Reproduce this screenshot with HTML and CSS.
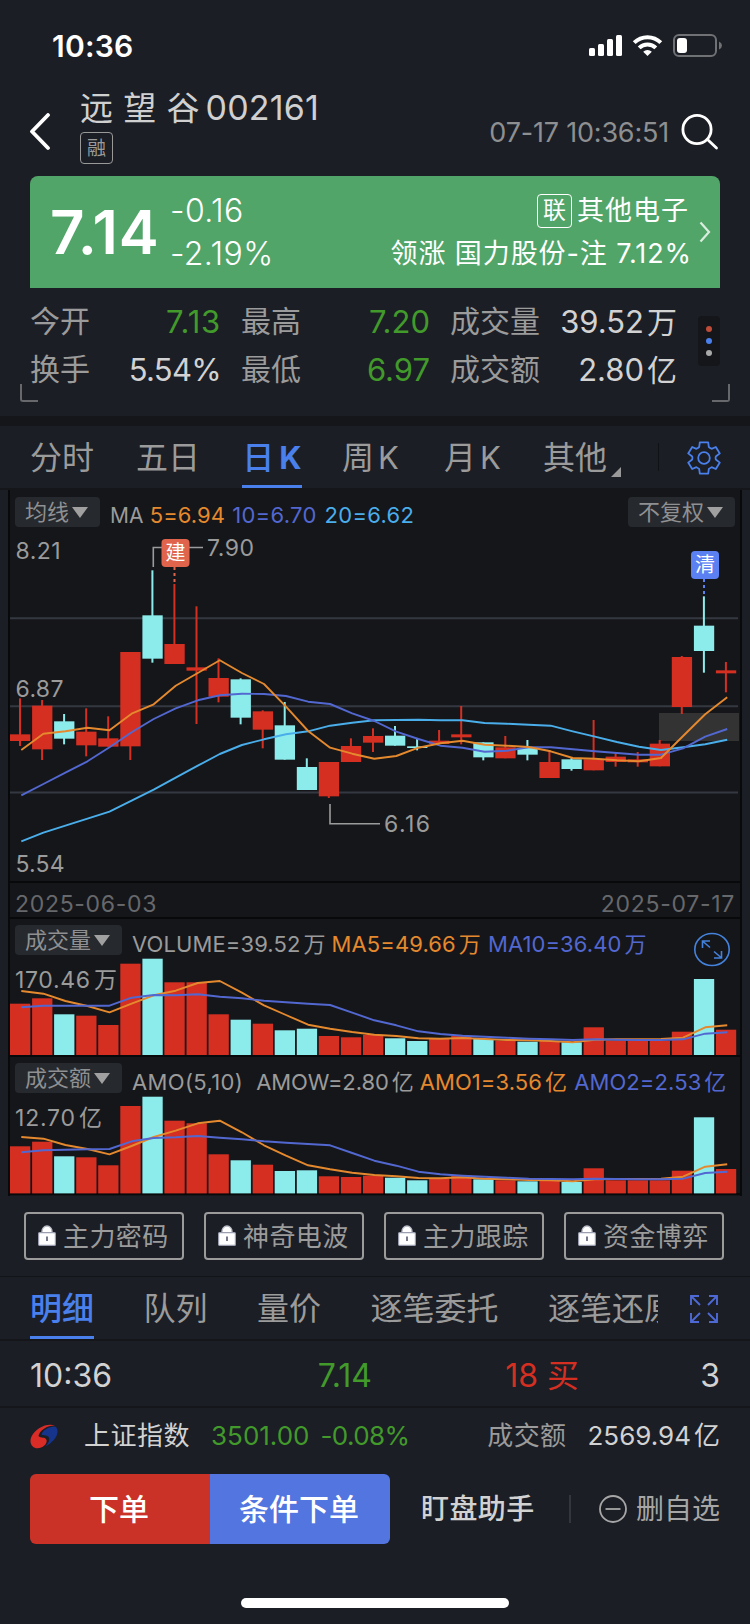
FILE: index.html
```html
<!DOCTYPE html>
<html lang="zh-CN">
<head>
    <meta charset="UTF-8">
    <meta name="viewport" content="width=device-width, initial-scale=1.0">
    <title>远望谷 002161</title>
    <link rel="stylesheet" href="styles.css">
</head>
<body>
    <div class="status-bar">
        <span class="clock">10:36</span>
        <svg class="status-icons" width="136" height="26" viewBox="586 32 136 26">
            <g fill="#fff">
                <rect x="589" y="48" width="6" height="8" rx="1.5"/>
                <rect x="598" y="44" width="6" height="12" rx="1.5"/>
                <rect x="607" y="39" width="6" height="17" rx="1.5"/>
                <rect x="616" y="35" width="6" height="21" rx="1.5"/>
                <path d="M647.5 56 L643.2 51.7 A6.2 6.2 0 0 1 651.8 51.7 Z"/>
            </g>
            <g fill="none" stroke="#fff" stroke-width="4">
                <path d="M639.2 47.8 A11.8 11.8 0 0 1 655.8 47.8"/>
                <path d="M634.2 42.6 A19 19 0 0 1 660.8 42.6"/>
            </g>
            <rect x="674" y="35" width="42" height="21" rx="5" fill="none" stroke="#6f7175" stroke-width="2"/>
            <rect x="677" y="38" width="10" height="15" rx="3" fill="#fff"/>
            <path d="M719 41.5 Q722 43 722 45.5 Q722 48 719 49.5 Z" fill="#6f7175"/>
        </svg>
    </div>

    <header class="header">
        <svg class="back" width="22" height="38" viewBox="0 0 22 38" fill="none" stroke="#fff" stroke-width="3.8" stroke-linecap="round" stroke-linejoin="round">
            <path d="M19 2 L3 18.5 L19 35"/>
        </svg>
        <div class="title">
            <div class="name">远 望 谷<span class="code">002161</span></div>
            <span class="tag">融</span>
        </div>
        <span class="time">07-17 10:36:51</span>
        <svg class="search" width="38" height="36" viewBox="0 0 38 36" fill="none" stroke="#fff" stroke-width="2.8" stroke-linecap="round">
            <circle cx="16" cy="15.5" r="14.1"/>
            <path d="M26.5 25.5 L35.5 34"/>
        </svg>
    </header>

    <section class="quote">
        <span class="price">7.14</span>
        <div class="change">
            <span>-0.16</span>
            <span>-2.19%</span>
        </div>
        <div class="sector">
            <div class="sector-name"><span class="tag-light">联</span><span>其他电子</span></div>
            <div class="sector-lead">领涨 国力股份-注 7.12%</div>
        </div>
        <svg class="arrow" width="12" height="22" viewBox="0 0 12 22" fill="none" stroke="#d9eddf" stroke-width="2.2">
            <path d="M1.5 1.5 L10 11 L1.5 20.5"/>
        </svg>
    </section>

    <section class="stats">
        <dl class="stat-grid">
            <dt>今开</dt><dd class="green open">7.13</dd>
            <dt>最高</dt><dd class="green">7.20</dd>
            <dt>成交量</dt><dd>39.52<i>万</i></dd>
            <dt>换手</dt><dd class="turnover">5.54%</dd>
            <dt>最低</dt><dd class="green">6.97</dd>
            <dt>成交额</dt><dd>2.80<i>亿</i></dd>
        </dl>
        <div class="more"><b class="dot red"></b><b class="dot blue"></b><b class="dot grey"></b></div>
        <span class="corner left"></span>
        <span class="corner right"></span>
    </section>

    <nav class="periods">
        <span>分时</span>
        <span>五日</span>
        <span class="active">日<em>K</em></span>
        <span>周<em>K</em></span>
        <span>月<em>K</em></span>
        <span class="other">其他<svg width="10" height="10" viewBox="0 0 10 10"><path d="M10 0 V10 H0 Z" fill="#999"/></svg></span>
        <svg class="gear" width="34" height="34" viewBox="-17 -17 34 34" fill="none" stroke="#4a80ec" stroke-width="1.8" stroke-linejoin="round">
            <path d="M-4.2 -15.6 H4.2 L4.8 -11 Q6 -10 7.6 -9.2 L11.8 -11 L15.8 -4.6 L11.8 -1.5 Q11.3 0 11.8 1.5 L15.8 4.6 L11.8 11 L7.6 9.2 Q6 10 4.8 11 L4.2 15.6 H-4.2 L-4.8 11 Q-6 10 -7.6 9.2 L-11.8 11 L-15.8 4.6 L-11.8 1.5 Q-11.3 0 -11.8 -1.5 L-15.8 -4.6 L-11.8 -11 L-7.6 -9.2 Q-6 -10 -4.8 -11 Z"/>
            <circle r="5.8"/>
        </svg>
    </nav>

    <main class="charts">
        <div class="panel kline">
            <svg class="plot" id="kline" viewBox="10 490 730 391"></svg>
            <div class="panel-head">
                <span class="select">均线<i></i></span>
                <span class="legend ma-title">MA</span>
                <span class="legend c5">5=6.94</span>
                <span class="legend c10">10=6.70</span>
                <span class="legend c20">20=6.62</span>
                <span class="select right">不复权<i></i></span>
            </div>
        </div>
        <div class="panel dates"><span>2025-06-03</span><span>2025-07-17</span></div>
        <div class="panel volume">
            <svg class="plot" id="volume" viewBox="10 919 730 136"></svg>
            <div class="panel-head">
                <span class="select">成交量<i></i></span>
                <span class="legend v1">VOLUME=39.52<i>万</i></span>
                <span class="legend c5">MA5=49.66<i>万</i></span>
                <span class="legend c10">MA10=36.40<i>万</i></span>
                <svg class="zoom" width="38" height="36" viewBox="693 931 38 36" fill="none" stroke="#4482dc" stroke-width="1.6">
                    <ellipse cx="712" cy="949.5" rx="17.2" ry="16"/>
                    <path d="M710 947.5 L703 941.5 M702.5 948 V941 H710 M714 951.5 L721 957.5 M714 958 H721.5 V951"/>
                </svg>
            </div>
        </div>
        <div class="panel amount">
            <svg class="plot" id="amount" viewBox="10 1057 730 137"></svg>
            <div class="panel-head">
                <span class="select">成交额<i></i></span>
                <span class="legend a1">AMO(5,10)</span>
                <span class="legend a2">AMOW=2.80<i>亿</i></span>
                <span class="legend c5">AMO1=3.56<i>亿</i></span>
                <span class="legend c10">AMO2=2.53<i>亿</i></span>
            </div>
        </div>
    </main>

    <svg class="defs" width="0" height="0">
        <symbol id="lock" viewBox="0 0 18 21">
            <path d="M4 8 V6.5 A5 5.5 0 0 1 14 6.5 V8 Z" fill="#fff" stroke="#b9bcc8" stroke-width="1.4"/>
            <rect x=".6" y="7.6" width="16.8" height="12.8" rx="1" fill="#fff" stroke="#9a9eae" stroke-width="1.2"/>
            <rect x="8" y="11.5" width="2" height="4.5" fill="#777b8c"/>
        </symbol>
    </svg>

    <div class="locked">
        <span class="lock-btn"><svg width="18" height="21"><use href="#lock"/></svg><span>主力密码</span></span>
        <span class="lock-btn"><svg width="18" height="21"><use href="#lock"/></svg><span>神奇电波</span></span>
        <span class="lock-btn"><svg width="18" height="21"><use href="#lock"/></svg><span>主力跟踪</span></span>
        <span class="lock-btn"><svg width="18" height="21"><use href="#lock"/></svg><span>资金博弈</span></span>
    </div>

    <nav class="detail-tabs">
        <div class="scroller">
            <span class="active">明细</span>
            <span>队列</span>
            <span>量价</span>
            <span>逐笔委托</span>
            <span>逐笔还原</span>
        </div>
        <svg width="28" height="28" viewBox="0 0 28 28" fill="none" stroke="#4f69d4" stroke-width="1.9">
            <path d="M1 10 V1 H9 M1 1 L10 10 M19 1 H27 V10 M27 1 L18 10 M1 18 V27 H9 M1 27 L10 18 M19 27 H27 V18 M27 27 L18 18"/>
        </svg>
    </nav>

    <div class="tick">
        <span class="tick-time">10:36</span>
        <span class="tick-price">7.14</span>
        <span class="tick-vol">18 买</span>
        <span class="tick-count">3</span>
    </div>

    <div class="index-row">
        <svg width="28" height="25" viewBox="0 0 28 25">
            <path d="M25 1.6 C17 -1.5 6 4 1.5 12.5 C-1.5 19 2.5 24.2 7.5 24.2 C13.5 24.2 17.5 19.5 16.5 16 C15.5 12.5 10.5 14.5 8.5 12 C9.5 6.5 17 1.5 25 1.6 Z" fill="#d92c26"/>
            <path d="M25 2.4 C18 2.6 12.5 6.5 11.5 10.5 C13.5 12 18.5 10.5 19.2 14 C19.8 17.2 17.5 20.5 15 22.5 C21.5 19.5 28 13 27.5 7 C27.3 4.3 26.3 2.8 25 2.4 Z" fill="#17348c"/>
        </svg>
        <span class="index-name">上证指数</span>
        <span class="index-value">3501.00</span>
        <span class="index-pct">-0.08%</span>
        <span class="index-label">成交额</span>
        <span class="index-amount">2569.94<i>亿</i></span>
    </div>

    <footer class="actions">
        <span class="btn order">下单</span>
        <span class="btn cond">条件下单</span>
        <span class="watch">盯盘助手</span>
        <span class="remove">
            <svg width="28" height="28" viewBox="0 0 28 28" fill="none" stroke="#a6a6a6" stroke-width="1.8">
                <circle cx="14" cy="14" r="13"/>
                <path d="M6.5 14 H21.5"/>
            </svg>
            <span>删自选</span>
        </span>
    </footer>
    <div class="home-bar"></div>

    <script src="chart.js"></script>
</body>
</html>
```
FILE: styles.css
```css
* {
    box-sizing: border-box;
}
body {
    margin: 0;
    width: 750px;
    height: 1624px;
    overflow: hidden;
    background-color: #1b1e25;
    color: #9b9b9b;
    font-family: Inter, "Noto Sans CJK SC", sans-serif;
    font-size: 30px;
    line-height: 1;
    white-space: nowrap;
}
i, em {
    font-style: normal;
}
svg {
    display: block;
    flex: none;
}
.defs {
    height: 0;
}

/* status bar */
.status-bar {
    height: 88px;
    padding: 0 28px 0 52px;
    display: flex;
    align-items: center;
    justify-content: space-between;
    color: #fff;
}
.clock {
    font-size: 30px;
    font-weight: 600;
    letter-spacing: 0.2px;
    padding-top: 3px;
}
.status-icons {
    margin-top: 2px;
}

/* header */
.header {
    height: 88px;
    padding: 0 31px 0 29px;
    display: flex;
    align-items: center;
}
.title {
    flex: 1;
    align-self: flex-start;
    margin-left: 29px;
}
.name {
    font-size: 33px;
    line-height: 40px;
    color: #d0d0d0;
    word-spacing: 1px;
}
.code {
    font-size: 34px;
    margin-left: 6px;
    letter-spacing: 0.2px;
}
.tag {
    display: flex;
    align-items: center;
    justify-content: center;
    width: 33px;
    height: 32px;
    margin-top: 4px;
    border: 1px solid #999;
    border-radius: 4px;
    font-size: 19px;
}
.time {
    font-size: 27px;
    letter-spacing: -0.2px;
    color: #8e8f91;
}
.search {
    margin-left: 12px;
}

/* price banner */
.quote {
    height: 112px;
    margin: 0 30px;
    padding: 0 9px 0 20px;
    display: flex;
    align-items: center;
    background-color: #52a569;
    border-radius: 8px 8px 0 0;
    color: #fff;
}
.price {
    width: 120px;
    font-size: 60px;
    font-weight: 600;
    letter-spacing: 0.8px;
}
.change {
    flex: 1;
    font-size: 32px;
    font-weight: 350;
    letter-spacing: 0.4px;
}
.change span {
    display: block;
    line-height: 43px;
}
.sector {
    padding-top: 1px;
    font-size: 27px;
    text-align: right;
    margin-right: 9px;
}
.sector-name {
    display: flex;
    justify-content: flex-end;
    align-items: center;
    height: 42px;
    margin-right: 1px;
    letter-spacing: 1px;
}
.tag-light {
    display: flex;
    align-items: center;
    justify-content: center;
    width: 35px;
    height: 34px;
    margin-right: 5px;
    border: 1px solid #fff;
    border-radius: 4px;
    font-size: 23px;
    letter-spacing: 0;
}
.sector-lead {
    line-height: 44px;
    letter-spacing: 0.9px;
    margin-right: -2px;
}

/* open / high / low */
.stats {
    position: relative;
    height: 128px;
    padding: 9px 30px 0;
    display: flex;
    align-items: flex-start;
}
.stat-grid {
    margin: 0 21px 0 0;
    flex: 1;
    display: grid;
    grid-template-columns: 80px 111px 100px 109px 111px 136px;
    grid-auto-rows: 48px;
    align-items: center;
}
.stat-grid dt:nth-of-type(3n+2), .stat-grid dt:nth-of-type(3n) {
    padding-left: 20px;
}
.stat-grid dd {
    margin: 0;
    font-size: 31px;
    text-align: right;
    color: #d2d2d2;
}
.stat-grid dd i {
    font-size: 30px;
    margin-left: 3px;
}
.stat-grid dd.green {
    color: #429a2b;
}
.stat-grid .open {
    letter-spacing: 0.8px;
}
.stat-grid .turnover {
    letter-spacing: -0.7px;
}
.more {
    width: 22px;
    height: 50px;
    margin-top: 19px;
    border-radius: 4px;
    background-color: #15161a;
    display: flex;
    flex-direction: column;
    align-items: center;
    justify-content: center;
    gap: 6px;
}
.dot {
    width: 6px;
    height: 6px;
    border-radius: 50%;
}
.dot.red { background-color: #be4c38; }
.dot.blue { background-color: #4a80ec; }
.dot.grey { background-color: #a9a9a9; }
.corner {
    position: absolute;
    top: 96px;
    width: 18px;
    height: 18px;
    border-bottom: 2px solid #66686c;
}
.corner.left {
    left: 20px;
    border-left: 2px solid #66686c;
    border-radius: 0 0 0 3px;
}
.corner.right {
    right: 20px;
    border-right: 2px solid #66686c;
    border-radius: 0 0 3px 0;
}

/* period tabs */
.periods {
    height: 74px;
    padding: 0 29px 0 30px;
    border-top: 10px solid #15161a;
    border-bottom: 2px solid #15161a;
    display: grid;
    grid-template-columns: 106px 106px 100px 102px 99px 1fr 34px;
    align-items: center;
    font-size: 32px;
    line-height: 64px;
}
.periods span {
    justify-self: start;
    height: 62px;
}
.periods em {
    margin-left: 4px;
    font-size: 31px;
}
.periods .active {
    width: 60px;
    text-align: center;
    color: #4a80ec;
    font-weight: 500;
    border-bottom: 3px solid #4a80ec;
}
.periods .active em {
    margin-left: 5px;
    font-weight: 700;
}
.periods .other {
    display: flex;
    align-items: flex-end;
    width: 116px;
    height: 28px;
    line-height: 26px;
    border-right: 1px solid #111216;
}
.other svg {
    margin: 0 0 -6px 4px;
}
.gear {
    margin-top: 2px;
}

/* charts */
.charts {
    height: 706px;
    border: solid #08090b;
    border-width: 0 2px;
    margin: 0 8px;
    background-color: #15161a;
}
.panel {
    position: relative;
    border-bottom: 2px solid #08090b;
}
.kline { height: 393px; }
.volume { height: 138px; }
.amount { height: 138px; }
.dates {
    height: 36px;
    padding: 9px 5px 0;
    display: flex;
    align-items: center;
    justify-content: space-between;
    font-size: 23px;
    letter-spacing: 0.7px;
    color: #67686b;
}
.plot {
    position: absolute;
    left: 0;
    top: 0;
    width: 730px;
}
.plot text {
    font-size: 23px;
    fill: #9b9b9b;
}
.plot .mark {
    font-size: 20px;
    fill: #fff;
    text-anchor: middle;
}
.panel-head {
    position: relative;
    display: flex;
    align-items: center;
    padding: 6px 5px 0;
    font-size: 22px;
}
.kline .panel-head {
    padding-top: 7px;
}
.select {
    display: flex;
    align-items: center;
    height: 30px;
    padding: 0 12px 0 10px;
    border-radius: 4px;
    background-color: #26292d;
    color: #8f9092;
}
.select i {
    margin-left: 3px;
    border: solid transparent;
    border-width: 11px 8px 0;
    border-top-color: #a0a0a0;
}
.select.right {
    margin-left: auto;
}
.legend {
    padding-top: 7px;
    letter-spacing: 0.1px;
}
.ma-title {
    margin-left: 10px;
    font-size: 21px;
}
.kline .legend {
    padding-top: 6px;
}
.c5 { color: #e5892e; margin-left: 6px; }
.c10 { color: #5268d0; margin-left: 7px; }
.c20 { color: #4aaeea; margin-left: 8px; }
.kline .c10, .kline .c20 {
    letter-spacing: 0.3px;
}
.v1, .a1 { margin-left: 10px; }
.a1 { letter-spacing: 0.35px; }
.a2 { margin-left: 13px; letter-spacing: -0.1px; }
.legend i {
    margin-left: 3px;
}
.zoom {
    position: absolute;
    right: 9px;
    top: 12px;
}

/* locked indicators */
.locked {
    display: flex;
    gap: 20px;
    height: 81px;
    padding: 16px 24px;
    border-bottom: 1px solid #131418;
}
.lock-btn {
    width: 160px;
    height: 48px;
    display: flex;
    align-items: center;
    gap: 7px;
    padding-left: 12px;
    border: 2px solid #9b9b9b;
    border-radius: 4px;
    font-size: 26px;
    letter-spacing: 0.4px;
}
.lock-btn svg {
    margin-top: -2px;
}
.lock-btn span {
    padding-top: 2px;
}

/* detail tabs */
.detail-tabs {
    display: flex;
    align-items: center;
    justify-content: space-between;
    height: 64px;
    padding: 0 32px 0 30px;
    border-bottom: 2px solid #15161a;
}
.detail-tabs svg {
    margin-top: 2px;
}
.scroller {
    display: flex;
    gap: 49.5px;
    width: 628px;
    height: 62px;
    overflow: hidden;
    font-size: 32px;
    line-height: 63px;
}
.scroller .active {
    color: #4a80ec;
    font-weight: 500;
    border-bottom: 3px solid #4a80ec;
}

/* latest trade */
.tick {
    display: grid;
    grid-template-columns: 200px 142px 207px 1fr;
    align-items: center;
    height: 67px;
    padding: 5px 30px 0;
    border-bottom: 2px solid #15161a;
    font-size: 32px;
    color: #d2d2d2;
}
.tick span {
    text-align: right;
}
.tick .tick-time { text-align: left; }
.tick-price { color: #429a2b; }
.tick-vol { color: #d52f22; }

/* index */
.index-row {
    display: flex;
    align-items: center;
    height: 56px;
    padding: 0 30px;
    font-size: 26px;
}
.index-name { margin-left: 26px; letter-spacing: 0.5px; color: #d2d2d2; }
.index-value { margin-left: 21px; color: #429a2b; }
.index-pct { margin-left: 11px; letter-spacing: -0.6px; color: #429a2b; }
.index-label { margin-left: auto; letter-spacing: 0.4px; }
.index-amount { margin-left: 21px; color: #d2d2d2; }
.index-amount i { margin-left: 3px; }

/* bottom actions */
.actions {
    display: flex;
    align-items: center;
    height: 70px;
    margin-top: 10px;
    padding: 0 30px;
}
.btn {
    width: 180px;
    padding-right: 2px;
    line-height: 70px;
    text-align: center;
    font-size: 30px;
    font-weight: 500;
    color: #fff;
}
.order {
    background-color: #ca3228;
    border-radius: 6px 0 0 6px;
}
.cond {
    background-color: #5275e0;
    border-radius: 0 6px 6px 0;
}
.watch {
    width: 181px;
    padding-left: 31px;
    line-height: 28px;
    border-right: 2px solid #33363d;
    font-size: 28px;
    font-weight: 500;
    letter-spacing: 0.4px;
    color: #d2d2d2;
}
.remove {
    margin-left: auto;
    display: flex;
    align-items: center;
    gap: 9px;
    font-size: 28px;
    color: #a6a6a6;
}
.home-bar {
    width: 268px;
    height: 10px;
    margin: 54px auto 0;
    border-radius: 5px;
    background-color: #fff;
}
```
FILE: chart.js
```js
const RED = '#d52f22', CYAN = '#8cecec';
const ORANGE = '#e5892e', BLUE = '#5268d0', SKY = '#4aaeea', GREY = '#9b9b9b';
const STEP = 22.06;

// high, top, bottom, low, in 1/3 px from the top of the plot
const candles = [
    [505, 613, 633, 648, 1], [510, 527, 658, 690, 1], [552, 574, 626, 643, 0], [535, 605, 646, 679, 1],
    [559, 625, 650, 650, 1], [366, 366, 649, 690, 1], [121, 256, 386, 398, 0], [162, 342, 402, 402, 1],
    [229, 412, 422, 582, 1], [385, 444, 500, 517, 1], [445, 448, 563, 583, 0], [541, 544, 599, 655, 1],
    [516, 586, 689, 689, 0], [685, 711, 780, 780, 0], [696, 696, 799, 804, 1], [625, 648, 696, 696, 1],
    [595, 618, 638, 666, 1], [588, 617, 647, 647, 0], [627, 649, 654, 661, 0], [600, 632, 642, 642, 1],
    [528, 613, 622, 643, 1], [637, 637, 682, 691, 0], [618, 652, 685, 685, 1], [630, 654, 674, 691, 0],
    [662, 696, 744, 744, 1], [684, 688, 717, 722, 0], [570, 688, 721, 721, 1], [670, 680, 696, 710, 1],
    [666, 688, 697, 710, 1], [630, 641, 709, 709, 1], [378, 381, 531, 552, 1], [199, 287, 363, 428, 0],
    [396, 421, 430, 487, 1]
];
const ma5 = [660, 611, 604, 593, 601, 551, 523, 467, 429, 391, 429, 462, 530, 603, 653, 671, 686, 678, 653, 640, 632, 644, 647, 651, 664, 684, 686, 691, 694, 684, 618, 553, 502];
const ma10 = [796, 762, 728, 694, 652, 607, 567, 535, 511, 496, 491, 492, 498, 515, 522, 550, 573, 605, 627, 647, 653, 665, 662, 652, 652, 658, 664, 669, 674, 674, 655, 620, 597];
const ma20 = [934, 908, 887, 866, 845, 812, 779, 743, 707, 672, 645, 628, 613, 604, 587, 578, 571, 570, 569, 571, 571, 579, 581, 584, 587, 604, 620, 636, 650, 660, 652, 643, 629];

const vol = [281, 265, 313, 317, 345, 161, 146, 217, 217, 313, 329, 341, 361, 356, 378, 382, 375, 385, 393, 387, 378, 387, 392, 395, 393, 397, 352, 392, 392, 392, 365, 207, 359];
const vol5 = [243, 251, 273, 288, 307, 281, 256, 242, 219, 213, 248, 286, 315, 344, 356, 366, 374, 378, 385, 386, 384, 387, 390, 391, 393, 397, 389, 388, 388, 387, 383, 352, 346];
const vol10 = [292, 287, 287, 287, 287, 263, 255, 256, 253, 260, 265, 272, 277, 281, 285, 308, 331, 346, 364, 372, 377, 380, 383, 386, 388, 390, 388, 389, 390, 390, 388, 371, 367];

const amo = [709, 695, 739, 742, 766, 588, 560, 632, 640, 733, 751, 764, 783, 781, 799, 801, 797, 803, 811, 806, 796, 808, 811, 814, 811, 816, 775, 811, 811, 811, 782, 622, 777];
const amo5 = [681, 686, 705, 717, 733, 708, 681, 662, 640, 632, 667, 706, 737, 766, 778, 788, 795, 799, 804, 805, 802, 806, 808, 810, 811, 814, 808, 807, 807, 806, 800, 770, 763];
const amo10 = [727, 721, 719, 718, 717, 694, 684, 682, 678, 683, 688, 694, 698, 702, 706, 729, 752, 767, 785, 793, 797, 800, 803, 806, 807, 808, 806, 807, 808, 808, 806, 789, 785];

function rect(x, y, w, h, fill, extra = '') {
    return `<rect x="${x}" y="${y}" width="${w}" height="${h}" fill="${fill}" ${extra}/>`;
}

function path(d, color, width = 1.6, extra = '') {
    return `<path d="${d}" fill="none" stroke="${color}" stroke-width="${width}" ${extra}/>`;
}

function text(x, y, str, length) {
    return `<text x="${x}" y="${y}" textLength="${length}">${str}</text>`;
}

function line(values, top, color) {
    const points = values.map((v, i) => `${(21.3 + i * STEP).toFixed(1)} ${(top + v / 3).toFixed(1)}`);
    return path('M' + points.join(' L'), color, 1.9, 'stroke-linejoin="round"');
}

function bars(values, top, base) {
    return values.map((v, i) => {
        const y = top + v / 3;
        return rect((10 + i * STEP).toFixed(1), y.toFixed(1), 20.3, (base - y).toFixed(1), candles[i][4] ? RED : CYAN);
    }).join('');
}

function drawKline() {
    const top = 530;
    let out = '';
    [618.3, 706.2, 792.5].forEach(y => out += path(`M10 ${y} H738`, '#343841', 2));
    out += rect(659, 713, 80, 28, '#333333');
    candles.forEach(([high, open, close, low, up], i) => {
        const x = 10 + i * STEP;
        const color = up ? RED : CYAN;
        out += rect((x + 9).toFixed(1), top + high / 3, 2, (low - high) / 3, color);
        out += rect(x.toFixed(1), top + open / 3, 20.3, (close - open) / 3, color);
    });
    out += line(ma20, top, SKY) + line(ma10, top, BLUE) + line(ma5, top, ORANGE);

    // highest and lowest price marks
    out += path('M153.3 567 V547.5 H203', GREY) + text(207, 556, '7.90', 47);
    out += path('M330 804 V823.8 H380', GREY) + text(384, 832, '6.16', 46);

    // trade marks
    out += path('M174.5 567 V583', '#e0644c', 2, 'stroke-dasharray="3 3"');
    out += rect(161.5, 539, 28, 28, '#e0644c', 'rx="4"');
    out += '<text class="mark" x="175.5" y="560">建</text>';
    out += path('M704 579 V595', '#5b80f2', 2, 'stroke-dasharray="3 3"');
    out += rect(691, 551, 28, 28, '#5b80f2', 'rx="4"');
    out += '<text class="mark" x="705" y="572">清</text>';

    out += text(15.5, 559, '8.21', 45) + text(15.5, 697, '6.87', 48) + text(15.5, 872, '5.54', 49);
    document.getElementById('kline').innerHTML = out;
}

function drawBars(id, values, short, long, base, label) {
    document.getElementById(id).innerHTML =
        bars(values, 910, base) + line(short, 910, ORANGE) + line(long, 910, BLUE) + label;
}

drawKline();
drawBars('volume', vol, vol5, vol10, 1055, text(15, 987.5, '170.46', 75) + '<text x="94" y="987.5">万</text>');
drawBars('amount', amo, amo5, amo10, 1193.4, text(15, 1125.5, '12.70', 60) + '<text x="79" y="1125.5">亿</text>');
```
